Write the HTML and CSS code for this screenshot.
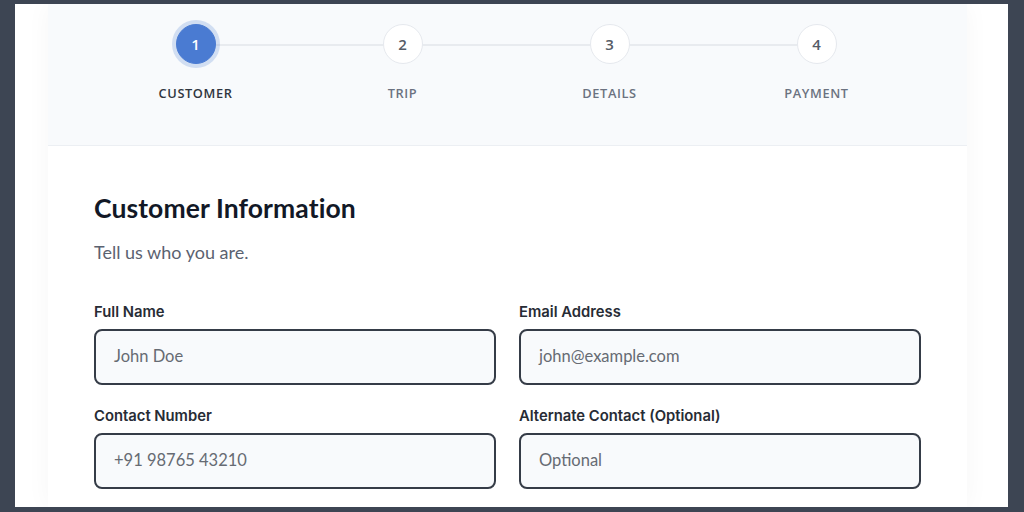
FILE: index.html
```html
<!DOCTYPE html>
<html lang="en">
<head>
<meta charset="utf-8">
<title>Booking - Customer</title>
<link rel="stylesheet" href="styles.css">
</head>
<body>
<div class="frame">
  <div class="column">
    <div class="stepper">
      <div class="step active">
        <div class="circle">1</div>
        <div class="step-label">CUSTOMER</div>
      </div>
      <div class="step">
        <div class="circle">2</div>
        <div class="step-label">TRIP</div>
      </div>
      <div class="step">
        <div class="circle">3</div>
        <div class="step-label">DETAILS</div>
      </div>
      <div class="step last">
        <div class="circle">4</div>
        <div class="step-label">PAYMENT</div>
      </div>
    </div>
    <div class="card">
      <h1 class="title">Customer Information</h1>
      <p class="subtitle">Tell us who you are.</p>
      <div class="grid">
        <div class="field">
          <label class="label">Full Name</label>
          <div class="input"><span class="ph">John Doe</span></div>
        </div>
        <div class="field">
          <label class="label">Email Address</label>
          <div class="input"><span class="ph">john@example.com</span></div>
        </div>
        <div class="field">
          <label class="label">Contact Number</label>
          <div class="input"><span class="ph">+91 98765 43210</span></div>
        </div>
        <div class="field">
          <label class="label">Alternate Contact (Optional)</label>
          <div class="input"><span class="ph">Optional</span></div>
        </div>
      </div>
    </div>
  </div>
</div>
</body>
</html>
```

FILE: styles.css
```css
* { box-sizing: border-box; }
html, body { margin: 0; padding: 0; }
body {
  background: #3d4553;
  width: 1024px;
  height: 512px;
  overflow: hidden;
  font-family: "Open Sans", "Lato", sans-serif;
}
.frame {
  margin: 4px 16px 0 15px;
  height: 503px;
  background: #ffffff;
  overflow: hidden;
  padding-left: 33px;
}
.column {
  width: 919px;
  height: 100%;
  background: #f8fafc;
  box-shadow: 0 0 24px rgba(30, 41, 59, 0.04);
  display: flex;
  flex-direction: column;
}
.stepper {
  display: grid;
  grid-template-columns: repeat(4, 207px);
  padding: 20px 0 0 44px;
  height: 141px;
}
.step {
  position: relative;
  display: flex;
  flex-direction: column;
  align-items: center;
}
.step::after {
  content: "";
  position: absolute;
  top: 20px;
  left: 50%;
  width: 207px;
  height: 2px;
  background: #e8ebef;
  z-index: 0;
}
.step.last::after { display: none; }
.circle {
  position: relative;
  z-index: 1;
  width: 40px;
  height: 40px;
  border-radius: 50%;
  background: #ffffff;
  border: 1.5px solid #e6e9ee;
  color: #555b66;
  font-family: "Open Sans", sans-serif;
  font-weight: 600;
  font-size: 15px;
  display: flex;
  align-items: center;
  justify-content: center;
}
.step.active .circle {
  background: #4a7bd2;
  border-color: #4a7bd2;
  color: #ffffff;
  box-shadow: 0 0 0 4px rgba(74, 123, 210, 0.22);
}
.step-label {
  margin-top: 21px;
  font-family: "Open Sans", sans-serif;
  font-size: 12.8px;
  font-weight: 600;
  letter-spacing: 0.6px;
  color: #6b7280;
  line-height: 16px;
}
.step.active .step-label { color: #2f3640; }
.card {
  flex: 1;
  background: #ffffff;
  border-top: 1px solid #eceff3;
  padding: 46px 46px 0 46px;
}
.title {
  margin: 0;
  font-family: "Lato", sans-serif;
  font-weight: 700;
  font-size: 26.5px;
  line-height: 32px;
  color: #121826;
  letter-spacing: 0.1px;
}
.subtitle {
  margin: 16px 0 0 0;
  font-family: "Lato", sans-serif;
  font-size: 18px;
  line-height: 24px;
  color: #5b6270;
}
.grid {
  margin-top: 39px;
  display: grid;
  grid-template-columns: 402px 402px;
  column-gap: 23px;
  row-gap: 22px;
}
.field {
  display: flex;
  flex-direction: column;
}
.label {
  font-family: "Inter", sans-serif;
  font-size: 14.8px;
  font-weight: 600;
  line-height: 18px;
  color: #272c35;
  margin-bottom: 8px;
}
.input {
  height: 56px;
  border: 2px solid #353c47;
  border-radius: 8px;
  background: #f8fafc;
  display: flex;
  align-items: center;
  padding: 0 0 2px 18px;
}
.ph {
  font-family: "Lato", sans-serif;
  font-size: 16.5px;
  color: #666b73;
}
```
